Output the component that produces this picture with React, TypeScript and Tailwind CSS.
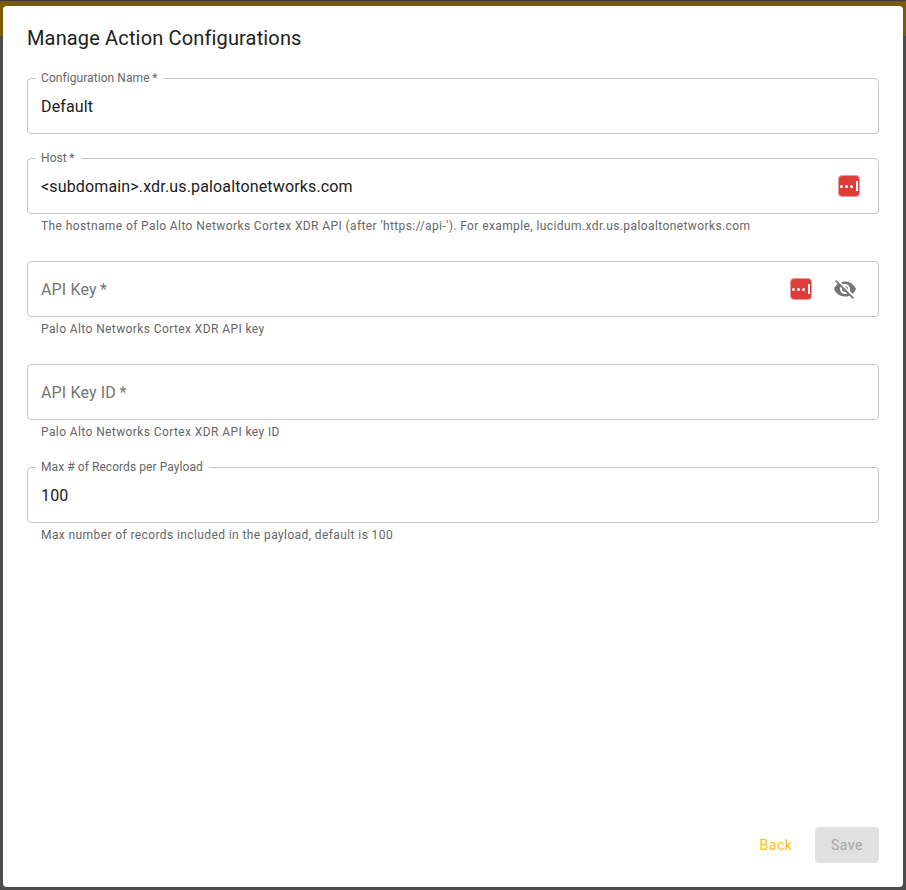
const font = { fontFamily: "Roboto, sans-serif" };

const PassIcon = () => (
  <div className="flex h-[22px] w-[22px] items-center justify-center gap-[2px] rounded-[4px] border border-[#ea9a99] bg-[#dd3c3b]">
    <span className="h-[3px] w-[3px] rounded-full bg-white" />
    <span className="h-[3px] w-[3px] rounded-full bg-white" />
    <span className="h-[3px] w-[3px] rounded-full bg-white" />
    <span className="ml-[1px] h-[10px] w-[1.5px] bg-white" />
  </div>
);

const EyeOff = () => (
  <svg viewBox="0 0 24 24" className="h-6 w-6 fill-[#757575]">
    <path d="M12 7c2.76 0 5 2.24 5 5 0 .65-.13 1.26-.36 1.83l2.92 2.92c1.51-1.26 2.7-2.89 3.43-4.75-1.73-4.39-6-7.5-11-7.5-1.4 0-2.74.25-3.98.7l2.16 2.16C10.74 7.13 11.35 7 12 7zM2 4.27l2.28 2.28.46.46C3.08 8.3 1.78 10.02 1 12c1.73 4.39 6 7.5 11 7.5 1.55 0 3.03-.3 4.38-.84l.42.42L19.73 22 21 20.73 3.27 3 2 4.27zM7.53 9.8l1.55 1.55c-.05.21-.08.43-.08.65 0 1.66 1.34 3 3 3 .22 0 .44-.03.65-.08l1.55 1.55c-.67.33-1.41.53-2.2.53-2.76 0-5-2.24-5-5 0-.79.2-1.53.53-2.2zm4.31-.78l3.15 3.15.02-.16c0-1.66-1.34-3-3-3l-.17.01z" />
  </svg>
);

type FieldProps = {
  label: string;
  value?: string;
  helper?: string;
  pass?: boolean;
  eye?: boolean;
  className?: string;
};

const Field = ({ label, value, helper, pass, eye, className }: FieldProps) => (
  <div className={className}>
    <div className="relative flex h-14 items-center rounded border border-[#c4c4c4] pl-[13px] pr-[18px]">
      {value ? (
        <>
          <span className="absolute -top-[8px] left-[8px] bg-white pl-[5px] pr-[6px] text-xs leading-[15px] tracking-[0.07px] text-[#666666]">
            {label}
          </span>
          <span className="flex-1 pt-[2px] text-base tracking-[0.15px] text-[#212121]">{value}</span>
        </>
      ) : (
        <span className="flex-1 pt-[2px] text-base tracking-[0.15px] text-[#757575]">{label}</span>
      )}
      {pass && <PassIcon />}
      {eye && (
        <div className="ml-[21px] mr-[3px]">
          <EyeOff />
        </div>
      )}
    </div>
    {helper && (
      <p className="mt-[5px] h-[15px] pl-[14px] text-xs leading-[15px] tracking-[0.4px] text-[#666666]">
        {helper}
      </p>
    )}
  </div>
);

export default function App() {
  return (
    <div style={font} className="h-[890px] w-[906px] overflow-hidden bg-[#4d4d4d]">
      <div className="h-[36px] border-t border-t-[#3a3a3a] bg-[#7a5c00] px-[3px] pt-[5px]">
        <div className="h-[31px] rounded-t bg-white" />
      </div>
      <div className="-mt-[1px] mx-[3px] flex h-[852px] flex-col rounded-b bg-white px-6 pb-6">
        <h1 className="-mt-[13px] text-xl font-normal leading-[32px] tracking-[0.15px] text-[#212121]">
          Manage Action Configurations
        </h1>
        <div className="mt-[24px] flex flex-1 flex-col">
          <Field label="Configuration Name&#8201;*" value="Default" />
          <Field
            className="mt-6"
            label="Host&#8201;*"
            value="<subdomain>.xdr.us.paloaltonetworks.com"
            pass
            helper="The hostname of Palo Alto Networks Cortex XDR API (after 'https://api-'). For example, lucidum.xdr.us.paloaltonetworks.com"
          />
          <Field
            className="mt-[27px]"
            label="API Key&#8201;*"
            pass
            eye
            helper="Palo Alto Networks Cortex XDR API key"
          />
          <Field
            className="mt-[27px]"
            label="API Key ID&#8201;*"
            helper="Palo Alto Networks Cortex XDR API key ID"
          />
          <Field
            className="mt-[27px]"
            label="Max # of Records per Payload"
            value="100"
            helper="Max number of records included in the payload, default is 100"
          />
        </div>
        <div className="flex items-center justify-end gap-2">
          <button className="h-9 w-16 rounded pl-[2px] text-sm font-normal tracking-[0.5px] text-[#ffc107]">Back</button>
          <button className="h-9 w-16 rounded bg-[#e0e0e0] text-sm font-normal tracking-[0.5px] text-[#a6a6a6]">Save</button>
        </div>
      </div>
    </div>
  );
}
